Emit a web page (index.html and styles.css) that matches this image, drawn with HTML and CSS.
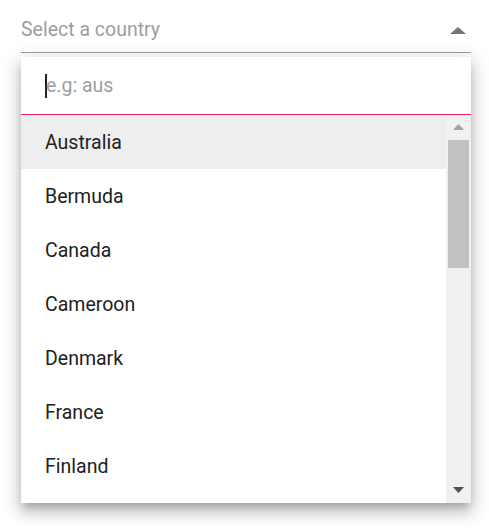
FILE: index.html
```html
<!DOCTYPE html>
<html>
<head>
<meta charset="utf-8">
<link rel="stylesheet" href="styles.css">
</head>
<body>
<div class="dropdown">
  <div class="field">
    <span class="placeholder">Select a country</span>
    <svg class="caret" width="16" height="7" viewBox="0 0 16 7"><path d="M0 7 L8 0 L16 7 Z" fill="#757575"/></svg>
  </div>
  <div class="popup">
    <div class="search">
      <span class="cursor"></span><span class="search-ph">e.g: aus</span>
    </div>
    <div class="listwrap">
      <ul class="list">
        <li class="item active">Australia</li>
        <li class="item">Bermuda</li>
        <li class="item">Canada</li>
        <li class="item">Cameroon</li>
        <li class="item">Denmark</li>
        <li class="item">France</li>
        <li class="item">Finland</li>
      </ul>
      <div class="scrollbar">
        <svg class="arrow-up" width="11" height="6" viewBox="0 0 11 6"><path d="M0 6 L5.5 0 L11 6 Z" fill="#a3a3a3"/></svg>
        <div class="thumb"></div>
        <div class="track-rest"></div>
        <svg class="arrow-down" width="11" height="6" viewBox="0 0 11 6"><path d="M0 0 L5.5 6 L11 0 Z" fill="#505050"/></svg>
      </div>
    </div>
  </div>
</div>
</body>
</html>
```
FILE: styles.css
```css
html, body {
  margin: 0;
  padding: 0;
  background: #ffffff;
}
body {
  font-family: Roboto, "Noto Sans", sans-serif;
  width: 489px;
  height: 530px;
  overflow: hidden;
}
.dropdown {
  margin-left: 21px;
  width: 450px;
}
.field {
  height: 52px;
  border-bottom: 1px solid #9e9e9e;
  display: flex;
  align-items: flex-start;
  justify-content: space-between;
  box-sizing: content-box;
}
.placeholder {
  font-size: 19.5px;
  color: #9e9e9e;
  margin-top: 18px;
  line-height: 24px;
}
.caret {
  margin-top: 27px;
  margin-right: 5px;
}
.popup {
  margin-top: 4px;
  background: #fff;
  box-shadow: 0 6px 8px -3px rgba(0,0,0,0.2), 0 10px 14px 1px rgba(0,0,0,0.14), 0 4px 18px 3px rgba(0,0,0,0.12);
}
.search {
  height: 58px;
  border-bottom: 1px solid #e91e63;
  display: flex;
  align-items: center;
  padding-left: 24px;
  box-sizing: border-box;
}
.cursor {
  display: inline-block;
  width: 2px;
  height: 24px;
  background: #212121;
  margin-right: -1px;
}
.search-ph {
  font-size: 19.5px;
  color: #9e9e9e;
  line-height: 24px;
}
.listwrap {
  display: flex;
  height: 388px;
  overflow: hidden;
}
.list {
  list-style: none;
  margin: 0;
  padding: 0;
  flex: 1;
}
.item {
  height: 54px;
  line-height: 56px;
  padding-left: 24px;
  font-size: 19.5px;
  color: #212121;
}
.item.active {
  background: #eeeeee;
}
.scrollbar {
  width: 25px;
  background: #f1f1f1;
  display: flex;
  flex-direction: column;
  align-items: center;
}
.arrow-up {
  margin-top: 9px;
  flex-shrink: 0;
}
.thumb {
  margin-top: 10px;
  width: 21px;
  height: 128px;
  background: #c1c1c1;
  flex-shrink: 0;
}
.track-rest {
  flex: 1;
}
.arrow-down {
  margin-bottom: 10px;
  flex-shrink: 0;
}
```
